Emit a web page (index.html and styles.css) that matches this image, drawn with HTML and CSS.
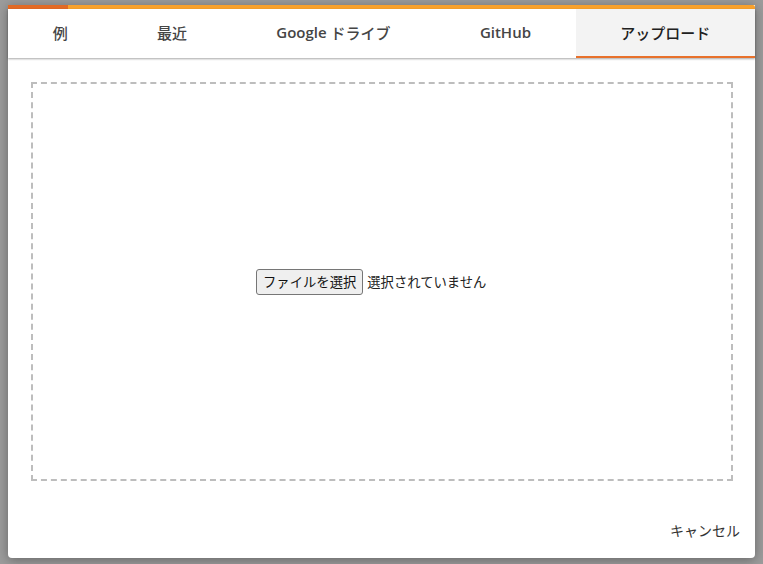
FILE: index.html
```html
<!DOCTYPE html>
<html lang="ja">
<head>
<meta charset="utf-8">
<title>ノートブックを開く</title>
<link rel="stylesheet" href="styles.css">
</head>
<body>
<div class="dialog">
  <div class="progress"><div class="progress-done"></div></div>
  <div class="tabs">
    <div class="tab">例</div>
    <div class="tab">最近</div>
    <div class="tab"><span class="en">Google</span>&nbsp;ドライブ</div>
    <div class="tab"><span class="en">GitHub</span></div>
    <div class="tab active">アップロード</div>
  </div>
  <div class="content">
    <div class="dropzone">
      <label class="file">
        <span class="file-button">ファイルを選択</span>
        <span class="file-name">選択されていません</span>
      </label>
    </div>
  </div>
  <div class="footer">
    <button class="cancel">キャンセル</button>
  </div>
</div>
</body>
</html>
```
FILE: styles.css
```css
html, body {
  margin: 0;
  padding: 0;
}
body {
  background: #9c9c9c;
  width: 763px;
  height: 564px;
  overflow: hidden;
  font-family: "Open Sans", "Noto Sans CJK JP", sans-serif;
}
.dialog {
  margin: 5px 8px 0 8px;
  width: 747px;
  height: 553px;
  background: #fff;
  border-radius: 0 0 4px 4px;
  box-shadow: 0 2px 12px rgba(0,0,0,0.35);
  display: flex;
  flex-direction: column;
}
.progress {
  height: 4px;
  background: #f8a12c;
  border-radius: 2px 2px 0 0;
}
.progress-done {
  width: 60px;
  height: 4px;
  background: #e26a25;
}
.tabs {
  display: flex;
  height: 49px;
  box-shadow: 0 1px 2px rgba(0,0,0,0.35);
  position: relative;
  z-index: 1;
}
.tab {
  flex: 1 1 auto;
  padding: 0 40px 1px;
  display: flex;
  align-items: center;
  justify-content: center;
  font-size: 15px;
  font-weight: 500;
  color: #454545;
  box-sizing: border-box;
  border-bottom: 2px solid transparent;
  white-space: nowrap;
}
.tab .en {
  font-weight: 600;
}
.tab.active {
  background: #f3f3f3;
  color: #202020;
  border-bottom-color: #e8712b;
}
.content {
  padding: 24px 22px 0 23px;
}
.dropzone {
  height: 399px;
  box-sizing: border-box;
  border: 2px dashed #bdbdbd;
  display: flex;
  align-items: center;
  justify-content: center;
}
.file {
  width: 252px;
  display: flex;
  align-items: center;
  gap: 4px;
  font-family: "Noto Sans CJK JP", sans-serif;
  font-size: 13.33px;
  color: #222;
}
.file-button {
  display: inline-block;
  padding: 1px 6px;
  line-height: 22px;
  border: 1px solid #767676;
  border-radius: 3px;
  background: #efefef;
  color: #111;
  white-space: nowrap;
}
.file-name {
  white-space: nowrap;
}
.footer {
  display: flex;
  justify-content: flex-end;
  padding: 35px 8px 0 0;
}
.cancel {
  border: none;
  background: none;
  font-family: "Noto Sans CJK JP", sans-serif;
  font-size: 14px;
  color: #333;
  padding: 4px 7px;
}
```
